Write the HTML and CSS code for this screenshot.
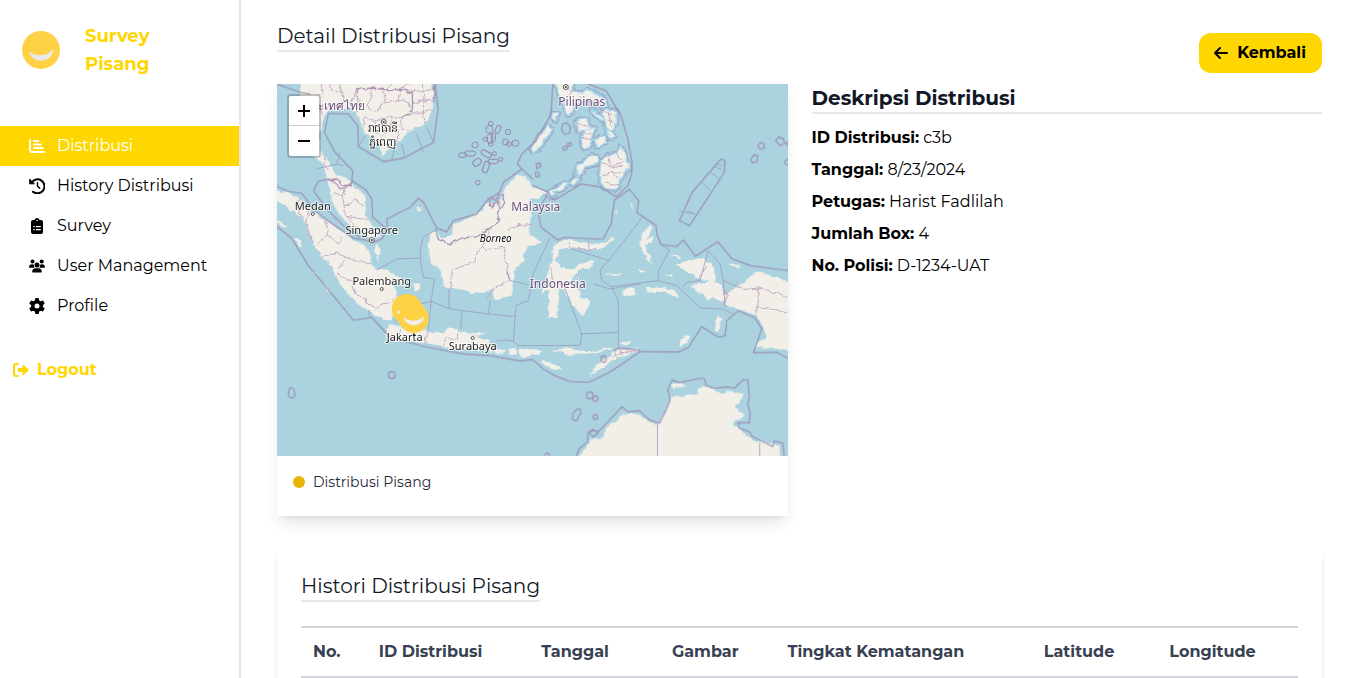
FILE: index.html
```html
<!DOCTYPE html>
<html lang="id">
<head>
<meta charset="utf-8">
<meta name="viewport" content="width=device-width, initial-scale=1">
<title>Detail Distribusi Pisang</title>
<link rel="stylesheet" href="styles.css">
</head>
<body>
<div class="layout">
  <aside class="sidebar">
    <div class="brand">
      <svg class="brand-logo" viewBox="0 0 38 38" aria-hidden="true"><circle cx="19" cy="19" r="19" fill="#ffd145"/><path d="M7 19.500c4 6 18 6.500 23-.5l1.500-.5C30 33 9 33.500 7 19.500z" fill="#e8e8e8"/></svg>
      <span class="brand-name">Survey Pisang</span>
    </div>
    <nav class="menu">
      <a class="menu-item active" href="#"><svg viewBox="0 0 16 16" fill="none" stroke="currentColor" stroke-linecap="round" stroke-width="1.800"><path d="M1 2v10.500q0 1.500 1.500 1.500H15M5 3h4.500M5 6.500h7M5 10h9"/></svg>Distribusi</a>
      <a class="menu-item" href="#"><svg viewBox="0 0 16 16" fill="none" stroke="currentColor" stroke-linecap="round" stroke-linejoin="round"><path d="M2.600 4.500A7 7 0 1 1 4 13.700" stroke-width="2"/><path d="M.7 1.500v4.300H5z" fill="currentColor"/><path d="M8.500 4.700V8l2.200 2.300" stroke-width="1.500"/></svg>History Distribusi</a>
      <a class="menu-item" href="#"><svg viewBox="0 0 16 16"><path fill="currentColor" fill-rule="evenodd" d="M4 2h1.500a2.600 2.600 0 0 1 5 0H12a2 2 0 0 1 2 2v10a2 2 0 0 1-2 2H4a2 2 0 0 1-2-2V4a2 2 0 0 1 2-2zm4-.300a.8.8 0 1 0 0 1.600.8.8 0 0 0 0-1.600zM4.300 8v1.200h1.400V8zm2.500 0v1.200h5V8zm-2.500 3v1.200h1.400V11zm2.500 0v1.200h5V11z"/></svg>Survey</a>
      <a class="menu-item" href="#"><svg viewBox="0 0 16 16" fill="currentColor"><circle cx="3.500" cy="3.500" r="2"/><circle cx="12.700" cy="3.500" r="2"/><circle cx="8" cy="7" r="2.500"/><path d="M0 9.300C0 7 1.200 6.300 3 6.300c1 0 1.800.2 2 .7-.3 1 0 2 .7 2.700H.4zM16 9.300c0-2.300-1.200-3-3-3-1 0-1.800.2-2 .7.300 1 0 2-.7 2.700h5.300zM3.200 14c0-2.500 1.300-3.700 3.300-3.700h3c2 0 3.300 1.200 3.300 3.700 0 .300-.3.500-.6.500H3.800c-.3 0-.6-.2-.6-.5z"/></svg>User Management</a>
      <a class="menu-item" href="#"><svg viewBox="0 0 16 16"><g fill="currentColor"><rect x="6" y="0" width="4" height="16" rx="1"/><rect x="6" y="0" width="4" height="16" rx="1" transform="rotate(60 8 8)"/><rect x="6" y="0" width="4" height="16" rx="1" transform="rotate(120 8 8)"/><circle cx="8" cy="8" r="6"/></g><circle cx="8" cy="8" r="2.500" fill="#fff"/></svg>Profile</a>
    </nav>
    <a class="logout" href="#"><svg viewBox="0 0 16 16"><path d="M5 2H3Q1 2 1 4v8q0 2 2 2h2" fill="none" stroke="currentColor" stroke-width="2" stroke-linecap="round"/><path d="M5.500 6H9.500V3.500q0-1 1-.5l5 4.500q.6.500 0 1L10.500 13q-1 .5-1-.5V10H5.500q-.7 0-.7-.700V6.700q0-.7.7-.700z" fill="currentColor"/></svg>Logout</a>
  </aside>

  <main class="content">
    <header class="page-head">
      <h1 class="title">Detail Distribusi Pisang</h1>
      <button class="back" type="button"><svg viewBox="0 0 16 16" fill="none" stroke="currentColor" stroke-width="2" stroke-linecap="round" stroke-linejoin="round"><path d="M14 8H2M7 3L2 8l5 5"/></svg>Kembali</button>
    </header>

    <div class="detail">
      <section class="map-card">
        <div class="map">
          <svg class="map-canvas" viewBox="0 0 511 372" preserveAspectRatio="xMidYMid slice" role="img" aria-label="Peta Distribusi">
            <defs>
              <filter id="coast" x="-5%" y="-5%" width="110%" height="110%"><feTurbulence type="fractalNoise" baseFrequency="0.12" numOctaves="3" seed="4"/><feDisplacementMap in="SourceGraphic" scale="6" xChannelSelector="R" yChannelSelector="G"/></filter>
              <path id="philippines" d="M68 0L125 0 120 25 150 30 170 20 210 45 225 65 205 70 180 55 160 50 130 60 118 90 105 95 95 60 80 30zM0 195L30 155 50 130 58 140 50 158 10 205 0 210zM62 92L76 95 72 108 62 104zM132 115L165 108 170 135 140 150zM215 80L255 85 250 125 242 140 228 135 215 105zM160 140L187 135 180 165 172 190 155 195 150 178zM180 80L212 105 205 112zM190 168L220 163 220 180 195 190zM205 270L210 235 235 215 260 215 265 190 280 215 290 255 270 280 255 318 225 315 205 295zM135 280L140 250 165 230 180 215 197 220 195 240 160 250 145 275zM225 135L245 160 235 165zM60 325L80 310 110 300 90 320zM115 298L130 285 142 290 128 302zM45 330L62 320 70 335 58 345z"/>
            </defs>
            <g filter="url(#coast)">
            <g transform="translate(255 -1) scale(.333333)" stroke-linejoin="round"><use href="#philippines" fill="none" stroke="#9f9ec0" stroke-width="17"/><use href="#philippines" fill="none" stroke="#9fd3e6" stroke-width="11"/></g>
            <g transform="translate(-1 -1) scale(.333333)" fill="#f2efe9">
              <!-- Indochina and the Malay peninsula -->
              <path d="M75 0H470L475 30 470 70 462 105 440 125 400 145 385 165 360 185 330 205 318 220 312 190 290 165 262 148 255 115 240 88 225 75 200 78 170 82 150 90 140 115 133 150 130 190 150 225 175 265 200 285 228 292 240 315 265 340 270 370 272 410 300 438 312 458 290 465 230 435 200 405 175 370 165 330 158 290 140 250 120 225 100 205 92 160 85 120 75 60z"/>
              <!-- Sumatra -->
              <path d="M0 320L40 332 70 345 100 380 150 410 190 440 230 465 250 480 280 505 290 540 300 558 335 560 345 575 350 600 362 630 365 655 360 680 345 712 320 710 300 698 270 678 240 655 215 628 185 598 170 558 140 520 110 480 95 440 80 405 30 370 0 350z"/>
              <path d="M5 415L30 430 24 434 5 422zM55 462L75 470 80 490 68 488zM105 560L125 572 118 576zM138 598L165 618 168 628 145 610zM300 480L315 500 305 530 295 505zM330 570L355 572 385 590 390 605 370 600zM410 602L430 600 428 622 415 622zM422 370L438 374 434 388 426 384z"/>
              <!-- Java and the lesser Sunda islands -->
              <path d="M330 740L350 722 380 732 440 738 455 748 510 750 520 733 545 738 552 748 575 752 640 770 650 805 600 798 540 798 500 788 440 780 380 773 335 773zM560 749L632 750 605 758zM652 793L690 803 680 814 658 806zM700 797L720 794 722 820 700 813zM727 803L768 795 795 805 780 818 735 822zM830 800L870 796 940 808 1008 793 1006 799 940 815 880 814zM795 834L835 838 863 860 840 862 805 846zM940 880L975 835 1010 812 1010 835 985 855zM1004 804L1090 796 1060 815 1010 832zM1034 780L1065 773 1060 783 1040 785zM1210 785L1225 758 1237 755 1230 775z"/>
              <!-- Borneo -->
              <g transform="translate(420 270)">
                <path d="M40 180L62 172 78 195 110 190 115 155 150 140 190 120 215 95 258 80 265 50 302 5 330 10 345 40 390 55 370 75 340 80 352 100 340 140 345 185 382 212 335 215 327 255 302 285 292 330 285 365 235 382 230 350 200 360 170 358 140 350 110 345 85 340 75 300 50 270 38 240z"/>
                <!-- Sulawesi and Halmahera -->
                <path d="M418 215L450 200 520 210 560 213 590 188 592 203 560 228 520 228 450 225 427 232 420 262 440 285 470 290 500 270 532 265 530 280 500 290 470 310 462 325 490 345 492 370 515 380 522 400 500 430 485 410 467 400 465 380 445 350 430 345 428 400 426 432 398 432 400 352 378 360 390 315 400 275 412 260 408 240z"/>
                <path d="M670 210L682 175 705 155 710 170 690 198 714 188 712 205 690 215 695 240 712 272 695 260 680 235zM665 290L692 298 680 302zM563 300L625 305 600 309zM602 108L608 125 601 122zM645 85L652 95 646 112z"/>
              </g>
              <!-- Moluccas and Papua -->
              <g transform="translate(969 348)">
                <path d="M230 195L300 178 345 190 350 225 347 245 375 265 380 285 430 255 470 218 510 228 580 250V463L500 425 497 390 475 350 430 335 380 315 340 295 325 305 310 285 275 262 300 255 330 245 300 240 265 215zM138 268L180 262 235 280 237 292 180 278 140 282zM70 272L100 268 112 282 95 295 75 290zM218 168L250 172 240 178zM198 228L222 226 218 234zM390 190L425 202 410 205zM355 350L368 358 362 398 348 395zM240 445L255 415 270 408 262 430zM470 448L480 425 510 415 545 440 545 450z"/>
              </g>
              <!-- Australia -->
              <path transform="translate(768 558)" d="M135 570L180 510 215 505 225 475 270 440 310 430 345 455 380 465 395 440 420 385 500 375 495 355 520 350 560 370 610 370 640 375 620 400 610 420 640 440 600 465 650 500 690 520 740 530 745 570zM415 345L450 340 460 352 420 358z"/>
              <use href="#philippines" transform="translate(768)"/>
            </g>
            </g>
            <!-- Maritime borders -->
            <g transform="scale(.333333)" fill="none" stroke="#9a86ae" stroke-width="3.500" stroke-linejoin="round" opacity=".9">
              <path d="M0 0L70 25 100 30M475 0L484 75 470 175 380 222 320 233 245 188 243 125 215 90 155 88 143 145 175 205 228 260 225 290 268 318 285 345 288 400 332 437 315 465 290 475M332 437L330 405 400 370 425 343 440 355 480 432 510 443 530 410 600 390 630 350 668 325 680 295 735 255 768 285M735 255L722 240 735 210 768 180M0 307L35 322 75 328 110 375 160 415 230 462 285 472M0 427L45 463 95 545 180 648 230 709 285 700 340 760 440 787 560 810 640 815 730 831 768 827 800 855 835 875 878 892 935 896 1003 862 1090 803 1205 804 1235 790 1275 728 1325 760 1345 755 1350 710 1385 680 1435 702 1455 735 1430 806 1500 805 1533 822"/>
              <path d="M110 320L125 292 155 285 180 300 190 315 210 308 228 292M110 320L150 375 200 425 250 460M1010 800L1025 792 1085 798 1090 803"/>
              <g transform="translate(768 0)"><path d="M60 0L55 90 12 165 0 180M165 0L220 20 265 95 285 165 298 235 297 270 285 305 250 338 200 308 145 300 62 350 48 325 0 305M48 325L15 380 25 430 75 468 95 460 210 466 235 420 245 348 290 316 318 350 312 385 370 425 372 450 385 482 432 487 452 468 488 517 555 473 598 525 655 545 768 560M440 410L478 325 560 230Q568 220 577 233L575 265 470 425z"/>
              <path d="M675 185l8-10 10 5 2 12-12 4zM728 170l10-11 14 5 4 14-14 7zM654 225l10-13 11 3-3 18-14 3zM768 170l-8 8 6 8M768 225l-12 6 2 10 10 2M90 190l10-5 4 10-12 4zM104 178l10-2 3 8-10 3zM10 240l12-4 2 10-12 8zM8 265l10 0 2 12-10 2zM90 120l12-4 12 14-4 18-14 3-10-14z"/></g>
              <g transform="translate(768 558)"><path d="M130 560L140 535 165 515 165 490 180 478 195 487 230 450 268 410 285 425 320 422 350 450 380 460 400 420 412 390 405 360 418 330 440 338 500 325 515 325 520 345 545 355 585 350 605 355 630 330 645 328 650 380 645 400 652 430 650 458 615 458 620 475 650 485 660 500 720 530 725 512 750 520 755 560"/>
              <circle cx="171" cy="376" r="10"/><circle cx="188" cy="386" r="8"/><circle cx="188" cy="441" r="7"/><path d="M130 420q12-8 14 4 2 8-6 14-2 14-12 14-10-2-6-14 0-10 10-18zM205 260l12-2 4 10-6 10-10-4zM168 485l18-4 10 8-16 12zM34 556l10-8 8 8"/></g>
              <circle cx="345" cy="873" r="10"/><path d="M38 913q12-4 14 6 6 16-2 22-12 2-14-6-3-14 2-22z"/>
            </g>
            <!-- Reefs -->
            <g transform="scale(.333333)" fill="none" stroke="#9a86ae" stroke-width="3">
              <circle cx="642" cy="119" r="7"/><circle cx="694" cy="144" r="8"/><circle cx="686" cy="174" r="9"/><rect x="706" y="169" width="20" height="18" rx="8"/><rect x="657" y="124" width="13" height="24" rx="6" transform="rotate(25 664 136)"/><rect x="628" y="125" width="20" height="22" rx="8"/><rect x="586" y="175" width="18" height="16" rx="7"/><rect x="545" y="207" width="24" height="13" rx="6"/><rect x="564" y="201" width="32" height="15" rx="7"/><rect x="612" y="202" width="32" height="15" rx="7" transform="rotate(28 628 210)"/><rect x="588" y="226" width="26" height="18" rx="8" transform="rotate(-35 601 235)"/><rect x="620" y="232" width="16" height="34" rx="7" transform="rotate(20 628 249)"/><rect x="634" y="226" width="30" height="13" rx="6"/><circle cx="653" cy="209" r="6"/><circle cx="672" cy="226" r="6"/><circle cx="625" cy="166" r="6"/><rect x="632" y="150" width="16" height="28" rx="7"/><rect x="644" y="148" width="12" height="24" rx="6"/><circle cx="642" cy="180" r="7"/><circle cx="697" cy="180" r="7"/><circle cx="603" cy="296" r="7"/>
            </g>
            <!-- Province lines -->
            <g filter="url(#coast)">
            <g transform="translate(-1 -1) scale(.333333)" fill="none" stroke="#c3abc4" stroke-width="3" stroke-linejoin="round">
              <path d="M130 0L140 30 120 50M160 0L165 20 200 30 190 0M200 30L210 60 235 50 245 20 285 15 330 20 345 0M245 20L250 60 240 88M285 15L290 45 270 70 300 85 330 60 320 20M330 60L370 50 375 20 410 0M370 50L400 60 410 90 380 105 350 100 300 110 270 105 262 130M410 60L440 50 475 55M410 90L440 90 470 80M440 0L445 50 440 90 445 120M380 105L375 140 400 145M350 100L345 130 370 150 360 185M300 110L295 140 320 160 345 130M410 25L470 20M95 60L130 70 140 100M150 225L140 245 158 260M158 290L185 285 200 310 225 310 228 292M175 330L200 335 210 310M200 335L205 370 240 350 270 370M205 370L215 400 270 410M215 400L240 430M70 345L60 370 80 405M100 380L90 420 110 480M150 410L155 460 120 490M155 460L190 480 200 460M140 520L190 510 230 530 290 540M190 558L210 530M185 575L230 600 240 635 270 650 300 680 320 660 350 655 362 630M370 735L372 773M455 748L450 782M545 738L545 765 510 765 505 790"/>
              <path d="M640 440L620 490 630 500 680 490 690 530 700 590 645 625 635 645M620 490L590 540 530 560 525 615M700 440L725 428 768 425"/>
              <path stroke="#ae95b6" stroke-width="4" d="M480 438L495 470 520 482 560 465 600 462 640 440 670 415 665 385 690 360 680 335 650 350 635 345M640 345L650 375 665 350 675 370M480 0L475 60M245 20L285 15 330 20M330 20L370 20 410 30 410 80 380 105M158 290L185 290 200 310 225 310 228 292"/>
              <path d="M820 545L830 580 840 610M880 478L885 495 945 500 935 472M945 500L960 495M850 600L910 615M1294 548L1265 590 1275 600M1345 614L1355 640 1345 665M1380 605L1400 620 1450 615 1540 642M1450 615L1440 690M1440 670L1480 675 1540 692"/>
              <path d="M905 40L940 60 975 55 985 85M900 120L935 130M990 85L1015 100M975 240L1000 250 1040 235M1000 215L1005 260 1030 290M980 275L1035 265M1010 250L1040 250M1020 205L1035 230M990 300L1030 305M860 5L890 25 870 50M915 150L945 150M920 170L950 165M985 110L1015 120M1000 85L1005 130M1010 820L1080 802M1015 805L1025 825M1035 800L1040 820M1055 800L1060 812"/>
            </g>
            </g>
            <g transform="scale(.333333)" fill="none" stroke="#9c9fbe" stroke-width="3" stroke-linejoin="round" opacity=".85">
              <path d="M120 255L180 240 200 245M180 240L190 205M245 188L265 155M345 227L355 190M385 222L375 180M440 205L420 150M470 175L450 130M432 522L430 495 440 460 480 436M300 558L360 525 430 522 440 580 473 585 463 652 520 675 635 690 715 698M463 652L430 660 375 690 355 715M463 652L455 740M517 672V615M635 690L640 650M556 680L552 735M715 698L710 772 725 785 910 784 915 750 860 600M715 698L718 664 755 650 768 572 820 460M660 770L690 768 710 772M690 558L700 590 755 602M1092 600L1000 615 950 600M1004 605L1003 608 1025 650V793M910 750L1024 745M1098 398L1020 500 970 558M885 495L1000 530M970 558L975 590 1003 608 1144 590 1145 560 1178 498 1150 480M1144 590L1200 605 1270 672 1340 675 1368 690M1220 610L1230 595 1270 590 1294 500 1330 540 1340 590 1390 612M1340 590L1345 670M1206 380L1250 390M1300 265L1330 285M1230 380L1258 390M1277 295L1299 320M1310 246L1338 258M1316 238L1338 246M275 678L280 705M1142 1020V1116M1449 1075V1116"/>
            </g>
            <g fill="#fff" stroke="#555"><circle cx="36" cy="130" r="1.500"/><circle cx="105" cy="205" r="1.500"/><circle cx="196" cy="254" r="1.500"/><circle cx="107" cy="38" r="2.500"/><circle cx="95" cy="156" r="2.500"/><circle cx="289" cy="3" r="2.500"/></g>
            <g fill="#333"><circle cx="107" cy="38" r="1"/><circle cx="95" cy="156" r="1"/><circle cx="289" cy="3" r="1"/></g>
            <g class="map-labels" text-anchor="middle">
              <text x="62" y="26" class="country">ระเทศไทย</text>
              <text x="106" y="48">រាជធានី</text>
              <text x="106" y="62">ភ្នំពេញ</text>
              <text x="36" y="126">Medan</text>
              <text x="95" y="150">Singapore</text>
              <text x="105" y="201">Palembang</text>
              <text x="128" y="257">Jakarta</text>
              <text x="196" y="266">Surabaya</text>
              <text x="219" y="158" class="island">Borneo</text>
              <text x="259" y="127" class="country">Malaysia</text>
              <text x="305" y="22" class="country">Pilipinas</text>
              <text x="281" y="204" class="country">Indonesia</text>
            </g>
            <g fill="#ffd145"><circle cx="130" cy="225" r="15"/><path d="M119 235L128 245 150 227 141 215z"/><circle cx="137" cy="234" r="15"/></g>
            <circle cx="122" cy="228" r="1.500" fill="#eee"/>
            <path d="M127 233c4 5 16 5 20-1 1 12-19 12-20 1z" fill="#eee"/>
            <path d="M136 249l3 2-2 1z" fill="#111"/>
          </svg>
          <div class="zoom">
            <button type="button" aria-label="Zoom in"><svg viewBox="0 0 12 12"><path d="M0 6H12M6 0V12" stroke="#000" stroke-width="2"/></svg></button>
            <button type="button" aria-label="Zoom out"><svg viewBox="0 0 12 12"><path d="M0 6H12" stroke="#000" stroke-width="2"/></svg></button>
          </div>
        </div>
        <div class="legend"><span class="dot"></span>Distribusi Pisang</div>
      </section>

      <section class="info">
        <h2 class="info-title">Deskripsi Distribusi</h2>
        <p><strong>ID Distribusi:</strong> c3b</p>
        <p><strong>Tanggal:</strong> 8/23/2024</p>
        <p><strong>Petugas:</strong> Harist Fadlilah</p>
        <p><strong>Jumlah Box:</strong> 4</p>
        <p><strong>No. Polisi:</strong> D-1234-UAT</p>
      </section>
    </div>

    <section class="history">
      <h2 class="title">Histori Distribusi Pisang</h2>
      <table class="history-table">
        <colgroup><col class="c-no"><col class="c-id"><col class="c-date"><col class="c-image"><col class="c-ripe"><col class="c-lat"><col class="c-lng"></colgroup>
        <thead><tr><th scope="col">No.</th><th scope="col">ID Distribusi</th><th scope="col">Tanggal</th><th scope="col">Gambar</th><th scope="col">Tingkat Kematangan</th><th scope="col">Latitude</th><th scope="col">Longitude</th></tr></thead>
      </table>
    </section>
  </main>
</div>
</body>
</html>
```
FILE: styles.css
```css
* { box-sizing: border-box; }
body { margin: 0; background: #fff; color: #000; font: 400 16px/24px Montserrat, Inter, "Open Sans", sans-serif; }
h1, h2, p { margin: 0; }
a { color: inherit; text-decoration: none; }
button { font: inherit; color: inherit; border: 0; padding: 0; cursor: pointer; }
svg { display: block; }

.layout { display: flex; height: 100vh; overflow: hidden; }
.sidebar { flex: none; width: 241px; border-right: 2px solid #e5e7eb; }
.brand { display: flex; align-items: center; gap: 25px; padding: 22px; height: 100px; color: #ffd700; font-size: 18px; font-weight: 700; line-height: 28px; }
.brand-logo { flex: none; width: 38px; height: 38px; }
.brand-name { width: 100px; }
.menu { margin-top: 26px; }
.menu-item { display: flex; align-items: center; gap: 12px; height: 40px; padding-left: 29px; }
.menu-item svg, .logout svg, .back svg { flex: none; width: 16px; height: 16px; }
.active { background: #ffd700; color: #fff; }
.logout { display: flex; align-items: center; gap: 8px; height: 40px; margin-top: 24px; padding-left: 13px; color: #ffd700; font-weight: 700; }

.content { flex: 1; min-width: 0; padding: 22px 23px 0 36px; }
.page-head { display: flex; align-items: flex-start; justify-content: space-between; margin-bottom: 11px; }
.title { width: fit-content; border-bottom: 2px solid #e5e7eb; font-size: 20px; font-weight: 400; line-height: 28px; color: #111827; }
.back { display: flex; align-items: center; gap: 8px; height: 40px; margin-top: 11px; padding: 0 16px 0 14px; border-radius: 12px; background: #ffd700; font-weight: 700; }

.detail { display: grid; grid-template-columns: 1fr 1fr; gap: 24px; }
.map-card { box-shadow: 0 10px 15px -3px rgb(0 0 0 / 10%), 0 4px 6px -4px rgb(0 0 0 / 10%); }
.map { position: relative; height: 372px; background: #aad3df; overflow: hidden; }
.map-canvas { width: 100%; height: 100%; }
.map-labels { font: 400 11px "Noto Sans", "Open Sans", sans-serif; fill: #222; stroke: #fff; stroke-opacity: .7; stroke-width: 2px; paint-order: stroke; }
.country { font-size: 12px; fill: #6b5078; }
.island { font-style: italic; font-size: 10px; fill: #000; }
.zoom { position: absolute; top: 10px; left: 10px; border: 2px solid rgb(0 0 0 / 20%); border-radius: 4px; background-clip: padding-box; }
.zoom button { display: grid; place-items: center; width: 30px; height: 30px; background: #fff; }
.zoom button:first-child { border-bottom: 1px solid #ccc; border-radius: 2px 2px 0 0; }
.zoom button:last-child { border-radius: 0 0 2px 2px; }
.zoom svg { width: 12px; height: 12px; }
.legend { display: flex; align-items: center; gap: 8px; padding: 16px 16px 24px; font-size: 14px; line-height: 20px; color: #1f2937; }
.dot { width: 12px; height: 12px; border-radius: 50%; background: #eab308; }

.info-title { margin-bottom: 12px; border-bottom: 2px solid #e5e7eb; font-size: 20px; font-weight: 700; line-height: 28px; color: #111827; }
.info p { margin-bottom: 8px; }
.info strong { font-weight: 700; }

.history { margin-top: 32px; padding: 24px; border-radius: 8px; box-shadow: 0 4px 6px -1px rgb(0 0 0 / 10%), 0 2px 4px -2px rgb(0 0 0 / 10%); }
.history-table { width: 100%; margin-top: 24px; border-collapse: separate; border-spacing: 0; table-layout: fixed; }
.history-table th { padding: 12px; border: solid #d1d5db; border-width: 2px 0; color: #374151; font-weight: 700; text-align: left; white-space: nowrap; }
.c-no { width: 6.6%; }
.c-id { width: 16.3%; }
.c-date { width: 13.1%; }
.c-image { width: 11.6%; }
.c-ripe { width: 25.7%; }
.c-lat { width: 12.6%; }
```
